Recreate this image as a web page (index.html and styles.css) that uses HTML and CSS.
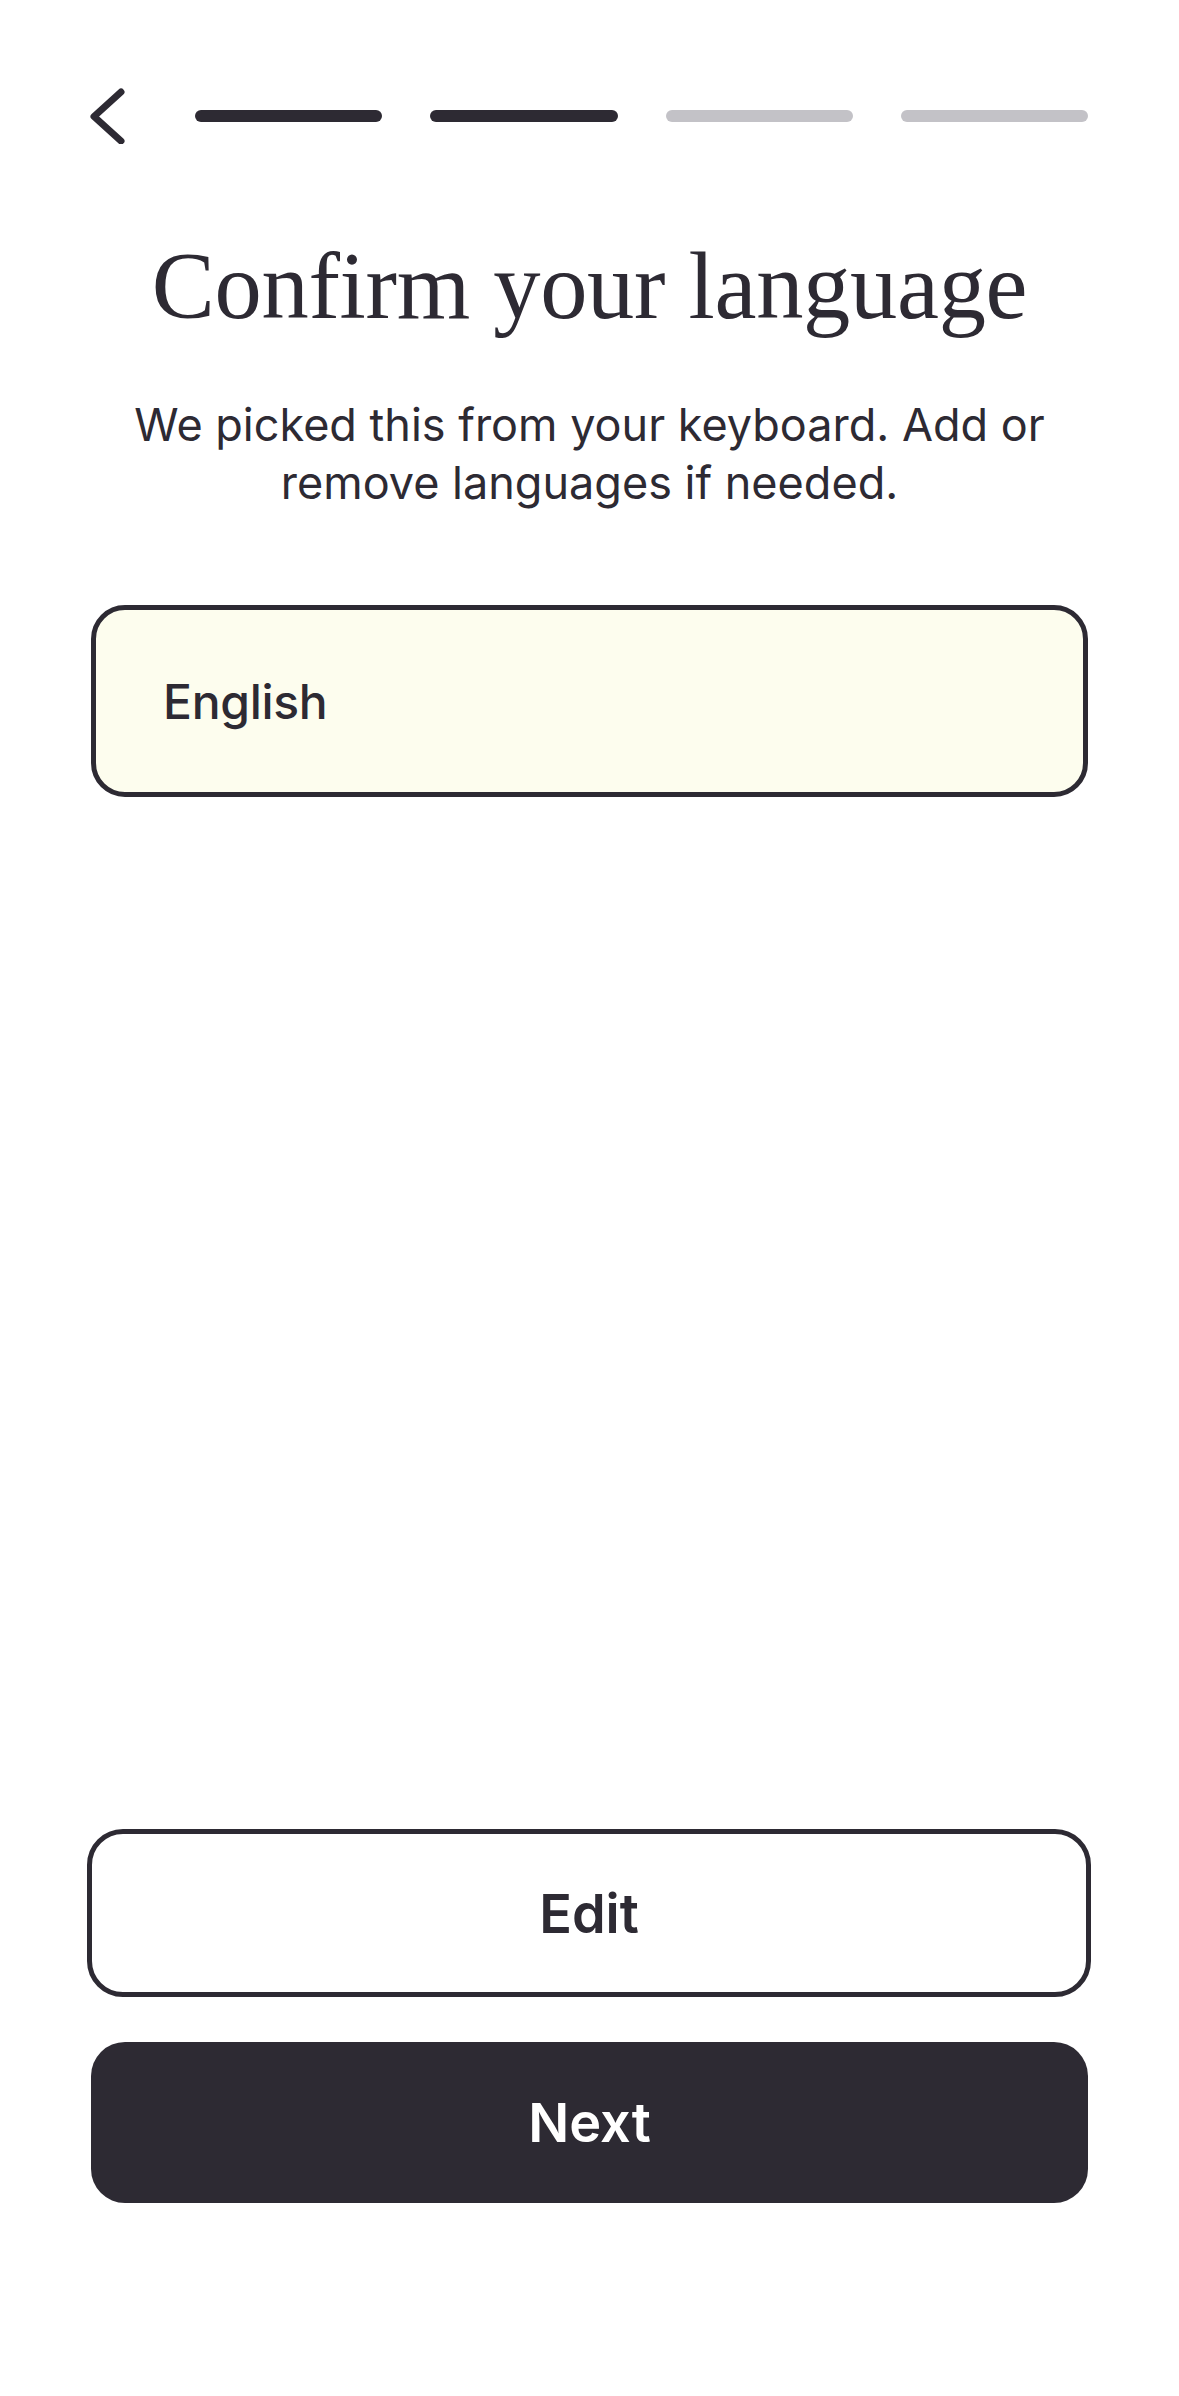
FILE: index.html
```html
<!DOCTYPE html>
<html lang="en">
<head>
<meta charset="utf-8">
<title>Confirm your language</title>
<link rel="stylesheet" href="styles.css">
</head>
<body>
<div class="screen">
  <header class="topbar">
    <svg class="back" width="40" height="56" viewBox="0 0 40 56" aria-label="Back">
      <polyline points="33,4 6,28.5 33,53" fill="none" stroke="#2d2a33" stroke-width="7" stroke-linecap="round" stroke-linejoin="round"/>
    </svg>
    <div class="progress">
      <span class="bar done"></span>
      <span class="bar done"></span>
      <span class="bar"></span>
      <span class="bar"></span>
    </div>
  </header>

  <h1 class="title">Confirm your language</h1>
  <p class="subtitle">We picked this from your keyboard. Add or remove languages if needed.</p>

  <div class="lang-card">
    <span class="lang-name">English</span>
  </div>

  <div class="spacer"></div>

  <button class="btn btn-outline">Edit</button>
  <button class="btn btn-solid">Next</button>
</div>
</body>
</html>
```

FILE: styles.css
```css
html, body {
  margin: 0;
  padding: 0;
  background: #ffffff;
}

.screen {
  box-sizing: border-box;
  min-height: 2396px;
  display: flex;
  flex-direction: column;
  padding: 88px 91px 193px 91px;
  color: #2d2a33;
  font-family: "Inter", "Noto Sans", sans-serif;
}

.topbar {
  display: flex;
  align-items: center;
  height: 56px;
}

.back {
  display: block;
  flex: 0 0 40px;
  margin-left: -3px;
}

.progress {
  flex: 1;
  display: flex;
  gap: 48px;
  margin-left: 67px;
}

.bar {
  flex: 1;
  height: 12px;
  border-radius: 6px;
  background: #c3c2c7;
}

.bar.done {
  background: #2d2a33;
}

.title {
  margin: 86px 0 0;
  font-family: "Liberation Serif", "DejaVu Serif", serif;
  font-weight: 400;
  font-size: 94.5px;
  line-height: 1.2;
  text-align: center;
  color: #2d2a33;
  letter-spacing: -0.3px;
}

.subtitle {
  margin: 53px 0 0;
  font-size: 45px;
  line-height: 58px;
  font-weight: 400;
  text-align: center;
}

.lang-card {
  box-sizing: border-box;
  margin-top: 93px;
  height: 192px;
  display: flex;
  align-items: center;
  padding-left: 67px;
  border: 5px solid #2d2a33;
  border-radius: 34px;
  background: #fdfdee;
}

.lang-name {
  font-size: 48px;
  font-weight: 500;
  letter-spacing: -0.3px;
}

.spacer {
  flex: 1;
}

.btn {
  box-sizing: border-box;
  display: flex;
  align-items: center;
  justify-content: center;
  font-family: "Inter", "Noto Sans", sans-serif;
  font-size: 54px;
  font-weight: 600;
  padding: 0;
  cursor: pointer;
}

.btn-outline {
  height: 168px;
  margin: 0 -3px 0 -4px;
  border: 5px solid #2d2a33;
  border-radius: 36px;
  background: #ffffff;
  color: #2d2a33;
}

.btn-solid {
  height: 161px;
  margin-top: 45px;
  border: none;
  border-radius: 34px;
  background: #2d2a33;
  color: #ffffff;
}
```
